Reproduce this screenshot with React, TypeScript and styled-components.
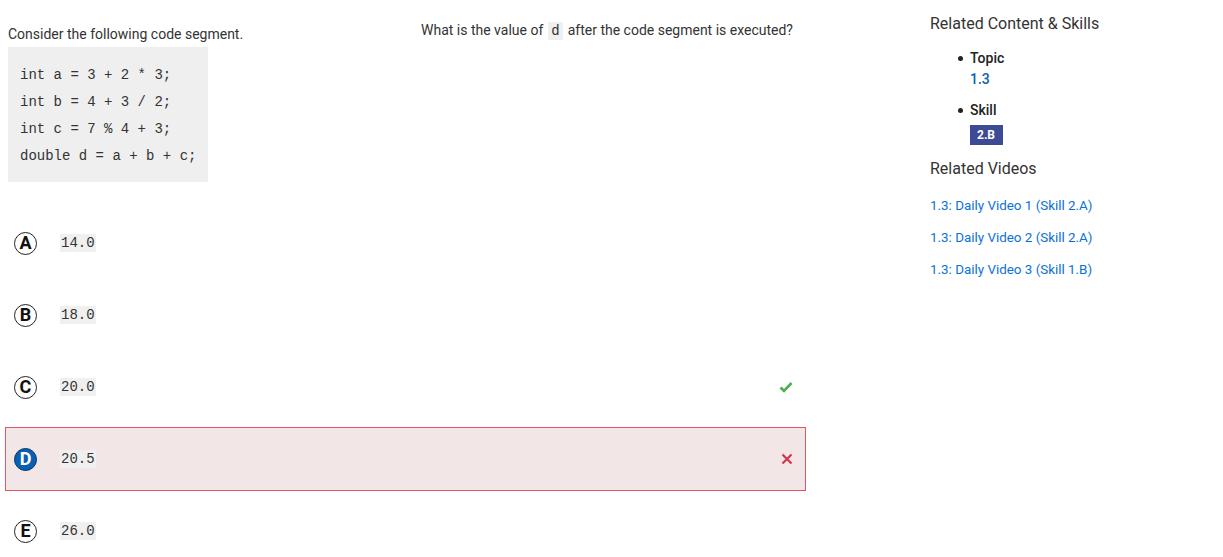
import * as React from 'react'
import styled, {createGlobalStyle} from 'styled-components'

const Global = createGlobalStyle`
  body {
    margin: 0;
    background: #fff;
    font-family: Roboto, "Liberation Sans", sans-serif;
    color: #333;
  }
`

const Page = styled.div`
  display: flex;
  align-items: flex-start;
  width: 1223px;
  height: 557px;
  overflow: hidden;
`

const Main = styled.div`
  width: 801px;
  margin-left: 5px;
`

const Stem = styled.div`
  display: grid;
  grid-template-columns: 413px 1fr;
  padding: 0 3px;
`

const Prompt = styled.p`
  margin: 24px 0 3px;
  font-size: 14px;
  line-height: 20px;
`

const Question = styled.p`
  margin: 20px 0 0;
  font-size: 14px;
  line-height: 20px;
`

const Inline = styled.code`
  font-family: "Liberation Mono", monospace;
  font-size: 14px;
  background: #f0f0f0;
  padding: 1px 3px;
  margin: 0 5px;
`

const CodeBlock = styled.pre`
  margin: 0;
  width: 200px;
  box-sizing: border-box;
  padding: 15px 12px 12px;
  background: #efefef;
  font-family: "Liberation Mono", monospace;
  font-size: 14px;
  line-height: 27px;
  color: #333;
`

const Answers = styled.div`
  display: flex;
  flex-direction: column;
  gap: 8px;
  margin-top: 29px;
`

const Row = styled.div<{$wrong?: boolean}>`
  display: flex;
  align-items: center;
  height: 64px;
  box-sizing: border-box;
  padding: 0 12px 0 8px;
  border: 1px solid ${p => (p.$wrong ? '#e25563' : 'transparent')};
  background: ${p => (p.$wrong ? '#f2e6e6' : 'transparent')};
`

const Letter = styled.span<{$selected?: boolean}>`
  display: inline-flex;
  align-items: center;
  justify-content: center;
  width: 23px;
  height: 23px;
  box-sizing: border-box;
  border-radius: 50%;
  border: 1.5px solid ${p => (p.$selected ? '#0b3a6e' : '#222')};
  background: ${p => (p.$selected ? '#0a5fb0' : '#fff')};
  color: ${p => (p.$selected ? '#fff' : '#111')};
  font-weight: 700;
  font-size: 18px;
  line-height: 1;
`

const Value = styled.code`
  margin-left: 23px;
  font-family: "Liberation Mono", monospace;
  font-size: 14px;
  line-height: 18px;
  background: #f0f0f0;
  padding: 0 1px;
  color: #333;
`

const Mark = styled.span`
  margin-left: auto;
  display: inline-flex;
`

const Side = styled.aside`
  margin-left: 124px;
  padding-top: 14px;
  width: 290px;
`

const Heading = styled.h3`
  margin: 0;
  font-size: 16px;
  font-weight: 400;
  line-height: 20px;
  color: #333;
`

const Bullets = styled.ul`
  margin: 14px 0 0;
  padding-left: 40px;
  list-style: none;
  font-size: 14px;
`

const Item = styled.li`
  position: relative;
  line-height: 21px;
  font-weight: 500;
  color: #222;
  & + & {
    margin-top: 10px;
  }
  &::before {
    content: '';
    position: absolute;
    left: -12px;
    top: 8px;
    width: 5px;
    height: 5px;
    border-radius: 50%;
    background: #222;
  }
`

const TopicLink = styled.div`
  color: #0a5fb0;
  font-weight: 500;
`

const Badge = styled.span`
  display: inline-block;
  margin-top: 4px;
  padding: 0 8px 0 7px;
  height: 20px;
  line-height: 20px;
  background: #3d4b94;
  color: #fff;
  font-size: 12px;
  font-weight: 700;
`

const VideosHeading = styled(Heading)`
  margin-top: 14px;
`

const Videos = styled.div`
  display: flex;
  flex-direction: column;
  gap: 12px;
  margin-top: 17px;
`

const VideoLink = styled.a`
  color: #0a72d6;
  font-size: 13.4px;
  line-height: 20px;
  text-decoration: none;
`

const Check = () => (
  <svg width="14" height="12" viewBox="0 0 14 12">
    <path d="M1.5 6.5 L5 9.8 L12.5 2" fill="none" stroke="#4caf50" strokeWidth="2.6" />
  </svg>
)

const Cross = () => (
  <svg width="12" height="12" viewBox="0 0 12 12">
    <path d="M1.5 1.5 L10.5 10.5 M10.5 1.5 L1.5 10.5" stroke="#d43649" strokeWidth="2.2" />
  </svg>
)

const answers = [
  {l: 'A', v: '14.0'},
  {l: 'B', v: '18.0'},
  {l: 'C', v: '20.0', correct: true},
  {l: 'D', v: '20.5', wrong: true},
  {l: 'E', v: '26.0'},
]

const App = () => {
  return (
    <Page>
      <Global />
      <Main>
        <Stem>
          <div>
            <Prompt>Consider the following code segment.</Prompt>
            <CodeBlock>
              {'int a = 3 + 2 * 3;\nint b = 4 + 3 / 2;\nint c = 7 % 4 + 3;\ndouble d = a + b + c;'}
            </CodeBlock>
          </div>
          <Question>
            What is the value of<Inline>d</Inline>after the code segment is executed?
          </Question>
        </Stem>
        <Answers>
          {answers.map(a => (
            <Row key={a.l} $wrong={a.wrong}>
              <Letter $selected={a.wrong}>{a.l}</Letter>
              <Value>{a.v}</Value>
              {a.correct && <Mark><Check /></Mark>}
              {a.wrong && <Mark><Cross /></Mark>}
            </Row>
          ))}
        </Answers>
      </Main>
      <Side>
        <Heading>Related Content &amp; Skills</Heading>
        <Bullets>
          <Item>
            Topic
            <TopicLink>1.3</TopicLink>
          </Item>
          <Item>
            Skill
            <div><Badge>2.B</Badge></div>
          </Item>
        </Bullets>
        <VideosHeading>Related Videos</VideosHeading>
        <Videos>
          <VideoLink href="#">1.3: Daily Video 1 (Skill 2.A)</VideoLink>
          <VideoLink href="#">1.3: Daily Video 2 (Skill 2.A)</VideoLink>
          <VideoLink href="#">1.3: Daily Video 3 (Skill 1.B)</VideoLink>
        </Videos>
      </Side>
    </Page>
  )
}

export default App
